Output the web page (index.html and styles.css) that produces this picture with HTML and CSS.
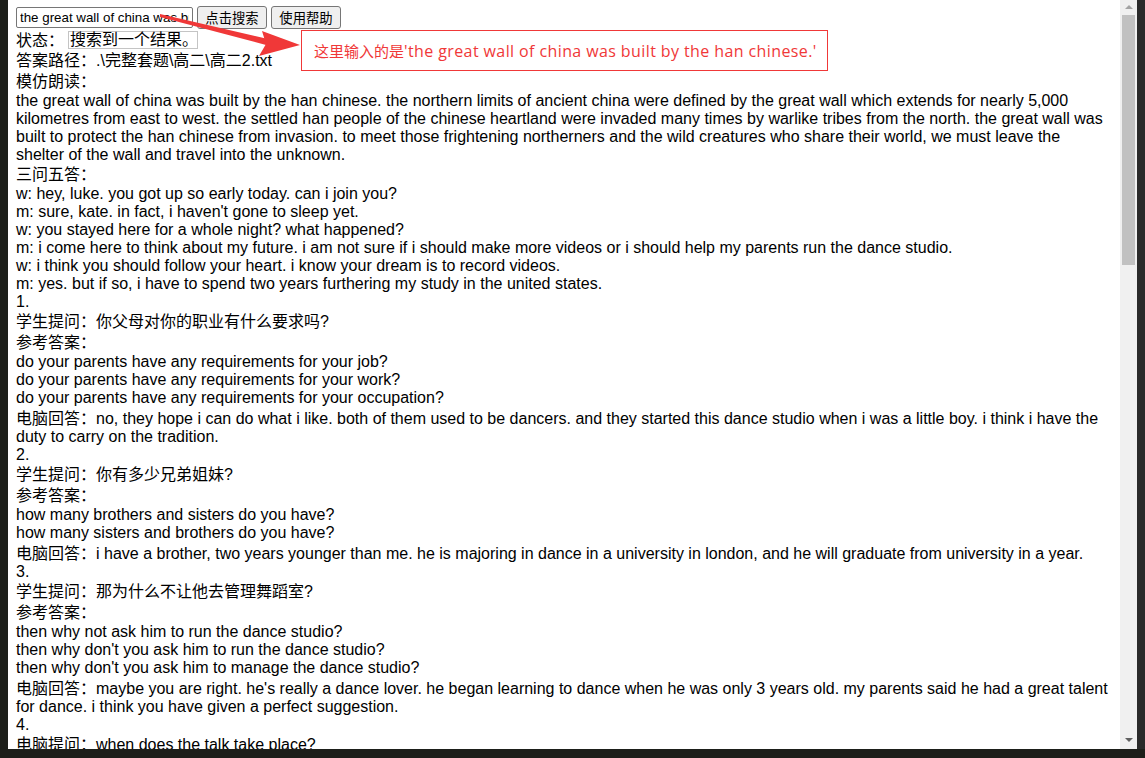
FILE: index.html
```html
<!DOCTYPE html>
<html lang="zh-CN">
<head>
<meta charset="utf-8">
<title>搜索</title>
<link rel="stylesheet" href="styles.css">
</head>
<body>
<div class="screen">
  <div class="window">
    <div class="page">
      <div class="toolbar">
        <input class="query" type="text" value="the great wall of china was built by the han chinese.">
        <button class="btn">点击搜索</button>
        <button class="btn">使用帮助</button>
      </div>
      <div class="line cn status-line">状态：<span class="status">搜索到一个结果。</span></div>
      <div class="line cn">答案路径：.\完整套题\高二\高二2.txt</div>
      <div class="line cn">模仿朗读：</div>
      <p class="text">the great wall of china was built by the han chinese. the northern limits of ancient china were defined by the great wall which extends for nearly 5,000 kilometres from east to west. the settled han people of the chinese heartland were invaded many times by warlike tribes from the north. the great wall was built to protect the han chinese from invasion. to meet those frightening northerners and the wild creatures who share their world, we must leave the shelter of the wall and travel into the unknown.</p>
      <div class="line cn">三问五答：</div>
      <div class="line">w: hey, luke. you got up so early today. can i join you?</div>
      <div class="line">m: sure, kate. in fact, i haven't gone to sleep yet.</div>
      <div class="line">w: you stayed here for a whole night? what happened?</div>
      <div class="line">m: i come here to think about my future. i am not sure if i should make more videos or i should help my parents run the dance studio.</div>
      <div class="line">w: i think you should follow your heart. i know your dream is to record videos.</div>
      <div class="line">m: yes. but if so, i have to spend two years furthering my study in the united states.</div>
      <div class="line">1.</div>
      <div class="line cn">学生提问：你父母对你的职业有什么要求吗?</div>
      <div class="line cn">参考答案：</div>
      <div class="line">do your parents have any requirements for your job?</div>
      <div class="line">do your parents have any requirements for your work?</div>
      <div class="line">do your parents have any requirements for your occupation?</div>
      <p class="text answer">电脑回答：no, they hope i can do what i like. both of them used to be dancers. and they started this dance studio when i was a little boy. i think i have the duty to carry on the tradition.</p>
      <div class="line">2.</div>
      <div class="line cn">学生提问：你有多少兄弟姐妹?</div>
      <div class="line cn">参考答案：</div>
      <div class="line">how many brothers and sisters do you have?</div>
      <div class="line">how many sisters and brothers do you have?</div>
      <p class="text answer">电脑回答：i have a brother, two years younger than me. he is majoring in dance in a university in london, and he will graduate from university in a year.</p>
      <div class="line">3.</div>
      <div class="line cn">学生提问：那为什么不让他去管理舞蹈室?</div>
      <div class="line cn">参考答案：</div>
      <div class="line">then why not ask him to run the dance studio?</div>
      <div class="line">then why don't you ask him to run the dance studio?</div>
      <div class="line">then why don't you ask him to manage the dance studio?</div>
      <p class="text answer">电脑回答：maybe you are right. he's really a dance lover. he began learning to dance when he was only 3 years old. my parents said he had a great talent for dance. i think you have given a perfect suggestion.</p>
      <div class="line">4.</div>
      <div class="line cn">电脑提问：when does the talk take place?</div>
    </div>
    <div class="scrollbar">
      <div class="arrow-up"></div>
      <div class="thumb"></div>
      <div class="track"></div>
      <div class="arrow-down"></div>
    </div>
  </div>
  <div class="edge"></div>

  <svg class="pointer" width="320" height="70" viewBox="0 0 320 70">
    <polygon points="160,14 268,39 266,45 160,17" fill="#f03838"/>
    <polygon points="262,31 300,45 259,56 266,44" fill="#f03838"/>
  </svg>
  <div class="note">这里输入的是<span class="note-en">'the great wall of china was built by the han chinese.'</span></div>
</div>
</body>
</html>
```

FILE: styles.css
```css
html, body {
  margin: 0;
  padding: 0;
}

body {
  width: 1145px;
  height: 758px;
  overflow: hidden;
  background: #1d1f1a;
  font-family: "Liberation Sans", Arial, "Noto Sans CJK SC", sans-serif;
}

.screen {
  position: relative;
  display: flex;
  height: 749px;
  padding-left: 8px;
}

.window {
  display: flex;
  width: 1129px;
  height: 749px;
  background: #ffffff;
}

.page {
  flex: 1;
  min-width: 0;
  padding: 6px 8px 0 8px;
  overflow: hidden;
  font-size: 16px;
  line-height: 18px;
  color: #000;
}

.toolbar {
  display: flex;
  align-items: center;
  gap: 4px;
  height: 23px;
}

.query {
  box-sizing: border-box;
  width: 177px;
  height: 21px;
  margin: 0;
  padding: 1px 3px;
  border: 1px solid #767676;
  border-radius: 2px;
  font-family: "Liberation Sans", Arial, sans-serif;
  font-size: 13.33px;
  color: #000;
  background: #fff;
}

.btn {
  box-sizing: border-box;
  width: 70px;
  height: 23px;
  margin: 0;
  padding: 0;
  border: 1px solid #767676;
  border-radius: 3px;
  background: #efefef;
  font-family: "Noto Sans CJK SC", sans-serif;
  font-size: 13.33px;
  color: #000;
}

.line {
  white-space: nowrap;
}

.cn {
  line-height: 21px;
}

.status-line {
  display: flex;
  align-items: center;
  height: 20px;
  margin-top: 1px;
}

.status {
  box-sizing: border-box;
  display: inline-block;
  width: 130px;
  height: 18px;
  margin-left: 4px;
  padding: 0 1px;
  border: 1px solid #c4c4c4;
  line-height: 16px;
  white-space: nowrap;
}

.text {
  margin: 0;
  line-height: 18px;
}

.answer {
  padding-top: 3px;
}

.scrollbar {
  width: 17px;
  background: #f0f0f0;
  display: flex;
  flex-direction: column;
  align-items: center;
}

.arrow-up {
  width: 0;
  height: 0;
  margin-top: 5px;
  border-left: 4px solid transparent;
  border-right: 4px solid transparent;
  border-bottom: 4px solid #a3a3a3;
}

.thumb {
  width: 13px;
  height: 250px;
  margin-top: 6px;
  background: #c1c1c1;
}

.track {
  flex: 1;
}

.arrow-down {
  width: 0;
  height: 0;
  margin-bottom: 7px;
  border-left: 4px solid transparent;
  border-right: 4px solid transparent;
  border-top: 4px solid #606060;
}

.edge {
  width: 8px;
  background: #2a2a2a;
}

.pointer {
  position: absolute;
  left: 0;
  top: 0;
}

.note {
  position: absolute;
  left: 301px;
  top: 30px;
  box-sizing: border-box;
  width: 527px;
  height: 41px;
  padding-left: 12px;
  border: 1px solid #f03838;
  background: #fff;
  color: #f03838;
  font-family: "Noto Sans CJK SC", sans-serif;
  font-size: 15px;
  line-height: 39px;
  white-space: nowrap;
}

.note-en {
  font-family: "Open Sans", "Noto Sans CJK SC", sans-serif;
  font-size: 16px;
  letter-spacing: 0.4px;
}
```
